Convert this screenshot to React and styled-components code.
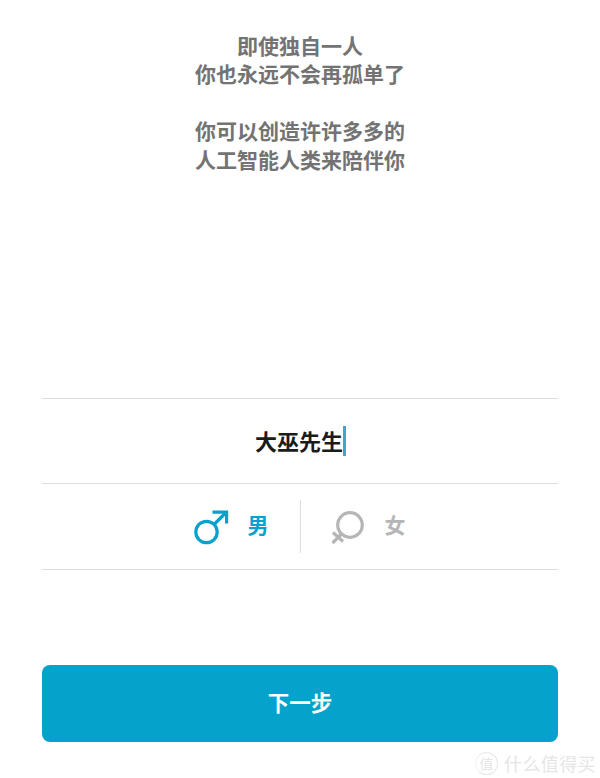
import React from "react"
import styled, { createGlobalStyle } from "styled-components"

const GlobalStyle = createGlobalStyle`
    html, body {
        margin: 0;
        padding: 0;
        background: #fff;
    }
    body {
        font-family: "Noto Sans CJK SC", "Liberation Sans", sans-serif;
    }
`

const Page = styled.div`
    position: relative;
    width: 600px;
    height: 778px;
    overflow: hidden;
    padding: 31px 42px 0;
    box-sizing: border-box;
    background: #fff;
`

const Intro = styled.div`
    height: 367px;
    text-align: center;
    color: #737373;
    font-size: 21px;
    font-weight: 700;
    line-height: 28.4px;
`

const Paragraph = styled.p`
    margin: 0 0 28.4px;
`

const NameRow = styled.div`
    height: 84px;
    border-top: 1px solid #dedede;
    border-bottom: 1px solid #dedede;
    display: flex;
    align-items: center;
    justify-content: center;
    font-size: 22px;
    font-weight: 700;
    color: #1b1b1b;
`

const NameText = styled.span`
    padding: 0 0 3px 1px;
`

const Caret = styled.span`
    width: 3px;
    height: 30px;
    background: #3ba7c9;
`

const GenderRow = styled.div`
    height: 85px;
    border-bottom: 1px solid #dedede;
    display: flex;
    align-items: center;
    justify-content: center;
`

const GenderOption = styled.div`
    width: 258px;
    box-sizing: border-box;
    display: flex;
    align-items: center;
    gap: ${p => p.$gap}px;
    justify-content: ${p => p.$side === "left" ? "flex-end" : "flex-start"};
    padding: ${p => p.$side === "left" ? "0 31px 0 0" : "0 0 0 30px"};
    color: ${p => p.$active ? "#05a3cb" : "#b5b5b5"};
    font-size: 21px;
    font-weight: 700;
`

const GenderLabel = styled.span`
    padding-bottom: 5px;
`

const Divider = styled.div`
    width: 1px;
    height: 53px;
    background: #dedede;
    flex-shrink: 0;
`

const NextButton = styled.button`
    display: block;
    width: 100%;
    height: 77px;
    margin-top: 95px;
    padding: 0 0 4px;
    border: none;
    border-radius: 8px;
    background: #05a3cb;
    color: #fff;
    font-family: inherit;
    font-size: 21.5px;
    font-weight: 700;
`

const Watermark = styled.div`
    position: absolute;
    right: 4px;
    bottom: 3px;
    display: flex;
    align-items: center;
    gap: 6px;
    color: #e6e6e6;
    font-size: 18px;
    line-height: 24px;
    letter-spacing: 0.4px;
`

const WatermarkBadge = styled.span`
    width: 21px;
    height: 21px;
    border: 1px solid #e8e8e8;
    border-left-color: #f4f4f4;
    border-radius: 50%;
    display: flex;
    align-items: center;
    justify-content: center;
    font-size: 14px;
    letter-spacing: 0;
`

const MaleIcon = () => (
    <svg width="36" height="36" viewBox="0 0 36 36" fill="none" stroke="currentColor" strokeWidth="3.2">
        <circle cx="13.5" cy="23" r="10.7" />
        <path d="M21 15.5 L33 3.5" />
        <path d="M19.5 3.2 H33.6 V14.5" />
    </svg>
)

const FemaleIcon = () => (
    <svg width="36" height="36" viewBox="0 0 36 36" fill="none" stroke="currentColor" strokeWidth="3.2">
        <circle cx="19" cy="16" r="12.3" />
        <path d="M10.5 25 L1.5 34" />
        <path d="M2 23.5 L12 32.5" />
    </svg>
)

export default function App() {
    return (
        <Page>
            <GlobalStyle />
            <Intro>
                <Paragraph>即使独自一人<br />你也永远不会再孤单了</Paragraph>
                <Paragraph>你可以创造许许多多的<br />人工智能人类来陪伴你</Paragraph>
            </Intro>
            <NameRow>
                <NameText>大巫先生</NameText><Caret />
            </NameRow>
            <GenderRow>
                <GenderOption $side="left" $active $gap={19}>
                    <MaleIcon />
                    <GenderLabel>男</GenderLabel>
                </GenderOption>
                <Divider />
                <GenderOption $side="right" $gap={18}>
                    <FemaleIcon />
                    <GenderLabel>女</GenderLabel>
                </GenderOption>
            </GenderRow>
            <NextButton>下一步</NextButton>
            <Watermark>
                <WatermarkBadge>值</WatermarkBadge>
                <span>什么值得买</span>
            </Watermark>
        </Page>
    )
}
